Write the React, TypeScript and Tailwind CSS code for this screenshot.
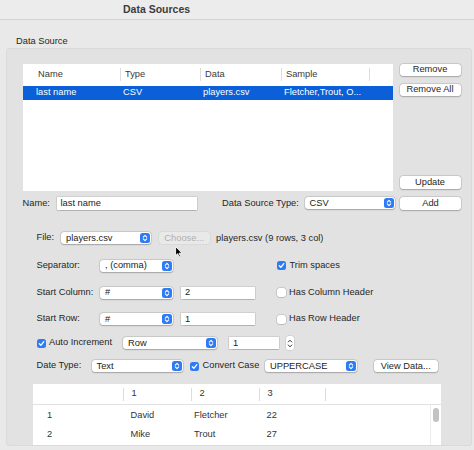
import React from "react";

function Stepper() {
  return (
    <span className="flex h-[10px] w-[10px] items-center justify-center rounded-[2.5px] bg-[#2f7bf5]">
      <svg width="6" height="8" viewBox="0 0 6 8">
        <path d="M1.3 3.1 L3 1.4 L4.7 3.1 M1.3 4.9 L3 6.6 L4.7 4.9" stroke="white" strokeWidth="1.1" fill="none" strokeLinecap="round" strokeLinejoin="round" />
      </svg>
    </span>
  );
}

function Select({ w, text }: { w: string; text: string }) {
  return (
    <div className={`${w} flex h-[12px] shrink-0 items-center justify-between rounded-[3px] bg-white pl-[5px] pr-[1px] text-[#222] shadow-[0_0_0_0.5px_rgba(0,0,0,0.16),0_0.5px_1.5px_rgba(0,0,0,0.22)]`}>
      <span className="leading-none">{text}</span>
      <Stepper />
    </div>
  );
}

function Input({ w, text }: { w: string; text: string }) {
  return (
    <div className={`${w} flex h-[12.5px] shrink-0 items-center bg-white pl-[4px] text-[#222] shadow-[0_0_0_0.5px_rgba(0,0,0,0.16),0_0.5px_1px_rgba(0,0,0,0.15)]`}>
      <span className="leading-none">{text}</span>
    </div>
  );
}

function Button({ w, text }: { w: string; text: string }) {
  return (
    <div className={`${w} flex h-[12.5px] shrink-0 items-center justify-center rounded-[3px] bg-white text-[#262626] shadow-[0_0_0_0.5px_rgba(0,0,0,0.14),0_0.5px_1.5px_rgba(0,0,0,0.22)]`}>
      <span className="leading-none">{text}</span>
    </div>
  );
}

function Check({ on }: { on: boolean }) {
  if (on)
    return (
      <span className="flex h-[9px] w-[9px] shrink-0 items-center justify-center rounded-[2.5px] bg-[#2f7bf5]">
        <svg width="7" height="7" viewBox="0 0 7 7">
          <path d="M1.3 3.7 L2.9 5.3 L5.8 1.6" stroke="white" strokeWidth="1.3" fill="none" strokeLinecap="round" strokeLinejoin="round" />
        </svg>
      </span>
    );
  return <span className="block h-[9px] w-[9px] shrink-0 rounded-[2.5px] bg-white shadow-[0_0_0_0.5px_rgba(0,0,0,0.2),0_0.5px_1px_rgba(0,0,0,0.15)]" />;
}

export default function App() {
  return (
    <div className="relative h-[450px] w-[474px] overflow-hidden bg-[#e9e9e9] font-['Liberation_Sans',Arial,sans-serif] text-[9.3px] text-[#262626]">
      {/* title bar */}
      <div className="flex h-[20px] items-center border-b border-[#d2d2d2] bg-[#ececec] pl-[123px]">
        <span className="text-[10.5px] font-bold leading-none text-[#3c3c3c]">Data Sources</span>
      </div>
      <div className="flex h-[28px] items-center pl-[16px] pt-[15px]">
        <span className="leading-none">Data Source</span>
      </div>
      {/* group box */}
      <div className="ml-[6px] flex h-[398px] w-[466px] flex-col rounded-[3px] border border-[#dadada] bg-[#e2e2e2]">
        {/* table + buttons */}
        <div className="mt-[14.5px] flex">
          <div className="ml-[15.5px] h-[127px] w-[370px] bg-white">
            <div className="flex h-[22px] items-center text-[#3a3a3a]">
              <div className="flex w-[97px] items-center pl-[15.5px]">Name</div>
              <div className="h-[13px] w-px bg-[#dcdcdc]" />
              <div className="w-[79px] pl-[4.5px]">Type</div>
              <div className="h-[13px] w-px bg-[#dcdcdc]" />
              <div className="w-[80px] pl-[4.5px]">Data</div>
              <div className="h-[13px] w-px bg-[#dcdcdc]" />
              <div className="w-[87.5px] pl-[4.5px]">Sample</div>
              <div className="h-[13px] w-px bg-[#dcdcdc]" />
            </div>
            <div className="flex h-[14.5px] items-center bg-[#0b5fd8] text-white">
              <div className="w-[97px] pl-[13.5px]">last name</div>
              <div className="w-[80px] pl-[3.5px]">CSV</div>
              <div className="w-[81px] pl-[3.5px]">players.csv</div>
              <div className="w-[88px] pl-[3.5px]">Fletcher,Trout, O...</div>
            </div>
          </div>
          <div className="ml-[7px] flex w-[61px] flex-col">
            <Button w="w-[61px]" text="Remove" />
            <div className="mt-[7.5px]">
              <Button w="w-[61px]" text="Remove All" />
            </div>
            <div className="mt-[80px]">
              <Button w="w-[61px]" text="Update" />
            </div>
          </div>
        </div>
        {/* name row */}
        <div className="mt-[6px] flex items-center">
          <span className="ml-[15.5px] w-[34px]">Name:</span>
          <Input w="w-[140px]" text="last name" />
          <span className="ml-[25.5px] w-[82.5px]">Data Source Type:</span>
          <Select w="w-[90px]" text="CSV" />
          <div className="ml-[5.5px]">
            <Button w="w-[61px]" text="Add" />
          </div>
        </div>
        {/* file row */}
        <div className="mt-[21px] flex items-center">
          <span className="ml-[29.5px] w-[24.5px]">File:</span>
          <Select w="w-[90px]" text="players.csv" />
          <div className="ml-[7.5px] flex h-[12px] w-[51.5px] items-center justify-center rounded-[3px] bg-[#e9e9e9] text-[#b0b0b0] shadow-[0_0_0_0.5px_rgba(0,0,0,0.08)]">
            <span className="leading-none">Choose...</span>
          </div>
          <span className="ml-[6px] leading-none">players.csv (9 rows, 3 col)</span>
        </div>
        {/* separator */}
        <div className="mt-[13.5px] flex items-center">
          <span className="ml-[29.5px] w-[63.5px]">Separator:</span>
          <Select w="w-[73px]" text=", (comma)" />
          <div className="ml-[104px]">
            <Check on />
          </div>
          <span className="ml-[3.5px]">Trim spaces</span>
        </div>
        {/* start column */}
        <div className="mt-[13px] flex items-center">
          <span className="ml-[29.5px] w-[63.5px]">Start Column:</span>
          <Select w="w-[73px]" text="#" />
          <div className="ml-[8px]">
            <Input w="w-[73.5px]" text="2" />
          </div>
          <div className="ml-[22.5px]">
            <Check on={false} />
          </div>
          <span className="ml-[3px]">Has Column Header</span>
        </div>
        {/* start row */}
        <div className="mt-[12.5px] flex items-center">
          <span className="ml-[29.5px] w-[63.5px]">Start Row:</span>
          <Select w="w-[73px]" text="#" />
          <div className="ml-[8px]">
            <Input w="w-[73.5px]" text="1" />
          </div>
          <div className="ml-[22.5px]">
            <Check on={false} />
          </div>
          <span className="ml-[3px]">Has Row Header</span>
        </div>
        {/* auto increment */}
        <div className="mt-[10px] flex items-center">
          <div className="ml-[29.5px]">
            <Check on />
          </div>
          <span className="ml-[3.5px] w-[74px]">Auto Increment</span>
          <Select w="w-[94px]" text="Row" />
          <div className="ml-[12px]">
            <Input w="w-[49.5px]" text="1" />
          </div>
          <div className="ml-[7.5px] flex h-[14px] w-[8px] flex-col items-center justify-center gap-[1px] rounded-[2.5px] bg-white shadow-[0_0_0_0.5px_rgba(0,0,0,0.14)]">
            <svg width="6" height="4" viewBox="0 0 6 4">
              <path d="M1.2 3 L3 1.2 L4.8 3" stroke="#333" strokeWidth="1" fill="none" strokeLinecap="round" strokeLinejoin="round" />
            </svg>
            <svg width="6" height="4" viewBox="0 0 6 4">
              <path d="M1.2 1 L3 2.8 L4.8 1" stroke="#333" strokeWidth="1" fill="none" strokeLinecap="round" strokeLinejoin="round" />
            </svg>
          </div>
        </div>
        {/* date type */}
        <div className="mt-[9px] flex items-center">
          <span className="ml-[29.5px] w-[55px]">Date Type:</span>
          <Select w="w-[91px]" text="Text" />
          <div className="ml-[7.5px]">
            <Check on />
          </div>
          <span className="ml-[3.5px] w-[62.5px]">Convert Case</span>
          <Select w="w-[91.5px]" text="UPPERCASE" />
          <div className="ml-[17.5px]">
            <Button w="w-[63.5px]" text="View Data..." />
          </div>
        </div>
        {/* bottom table */}
        <div className="ml-[25.5px] mt-[11px] flex h-[64px] w-[408px] flex-col bg-white">
          <div className="flex h-[21px] shrink-0 items-center border-b border-[#e2e2e2] text-[#333]">
            <div className="w-[90px]" />
            <div className="h-[13px] w-px bg-[#dcdcdc]" />
            <div className="w-[67px] pl-[8px]">1</div>
            <div className="h-[13px] w-px bg-[#dcdcdc]" />
            <div className="w-[67px] pl-[8px]">2</div>
            <div className="h-[13px] w-px bg-[#dcdcdc]" />
            <div className="w-[65px] pl-[8px]">3</div>
            <div className="h-[13px] w-px bg-[#dcdcdc]" />
          </div>
          <div className="flex flex-1">
            <div className="flex w-[397px] flex-col pt-[2px] text-[#333]">
              <div className="flex h-[18.5px] items-center">
                <div className="w-[90px] pl-[14.5px]">1</div>
                <div className="w-[68px] pl-[8px]">David</div>
                <div className="w-[68px] pl-[3.5px]">Fletcher</div>
                <div className="w-[66px] pl-[8px]">22</div>
              </div>
              <div className="flex h-[18.5px] items-center">
                <div className="w-[90px] pl-[14.5px]">2</div>
                <div className="w-[68px] pl-[8px]">Mike</div>
                <div className="w-[68px] pl-[3.5px]">Trout</div>
                <div className="w-[66px] pl-[8px]">27</div>
              </div>
            </div>
            <div className="flex w-[11px] justify-center border-l border-[#ececec] pt-[3px]">
              <div className="h-[14px] w-[6px] rounded-full bg-[#c2c2c2]" />
            </div>
          </div>
        </div>
      </div>
      {/* mouse cursor */}
      <svg className="absolute left-[174.5px] top-[246px]" width="8" height="12" viewBox="0 0 8 12">
        <path d="M0.6 0.6 L0.6 9.6 L2.7 7.7 L4.1 10.9 L5.5 10.3 L4.1 7.2 L7 7.2 Z" fill="#000" stroke="#fff" strokeWidth="0.9" strokeLinejoin="round" />
      </svg>
    </div>
  );
}
